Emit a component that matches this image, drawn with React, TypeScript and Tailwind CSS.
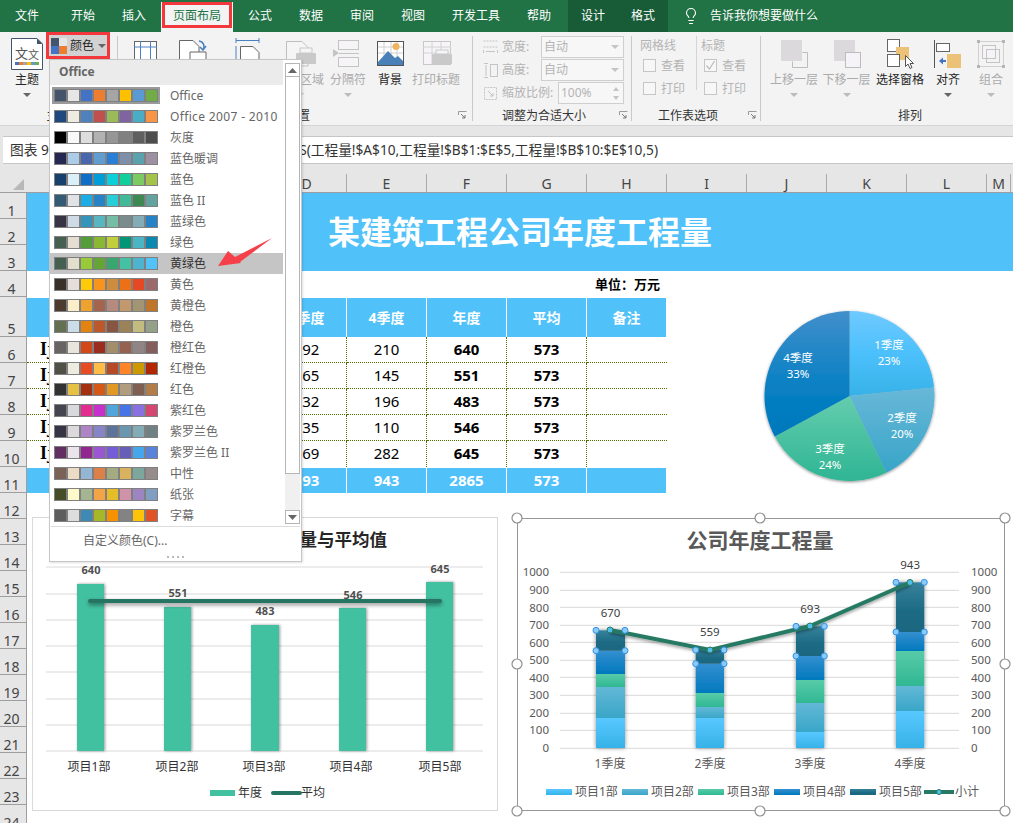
import React from "react";
import { Lightbulb } from "lucide-react";

const tabs: [string, string][] = [
  ["文件", "w-[54px]"],
  ["开始", "w-[58px]"],
  ["插入", "w-[44px]"],
];
const tabs2: [string, string][] = [
  ["公式", "w-[54px]"],
  ["数据", "w-[48px]"],
  ["审阅", "w-[54px]"],
  ["视图", "w-[48px]"],
  ["开发工具", "w-[78px]"],
  ["帮助", "w-[48px]"],
];

function Tab({ label, cls }: { label: string; cls: string }) {
  return <div className={`h-[32px] leading-[32px] text-center text-white text-[12px] ${cls}`}>{label}</div>;
}

function TabBar() {
  return (
    <div className="flex h-[32px] bg-[#217346] shrink-0">
      {tabs.map(([l, c]) => <Tab key={l} label={l} cls={c} />)}
      <div className="ml-[5px] mt-[2px] w-[72px] h-[30px] bg-[#f3f3f3] pl-px">
        <div className="h-[26px] w-[70px] border-[3px] border-[#f2383c] text-center leading-[21px] text-[12px] text-[#217346]">页面布局</div>
      </div>
      {tabs2.map(([l, c]) => <Tab key={l} label={l} cls={c} />)}
      <div className="ml-[5px] flex bg-[#185c37]">
        <Tab label="设计" cls="w-[50px]" />
        <Tab label="格式" cls="w-[50px]" />
      </div>
      <Lightbulb className="ml-[14px] mt-[7px] text-white" size={18} strokeWidth={1.5} />
      <div className="ml-[10px] leading-[32px] text-white text-[12px]">告诉我你想要做什么</div>
    </div>
  );
}

function Ic({ cx, children }: { cx: number; children?: React.ReactNode }) {
  return (
    <svg width={40} height={32} viewBox={`${cx - 20} 40 40 32`} className="overflow-visible shrink-0">
      {children}
    </svg>
  );
}

function Caret({ color }: { color: string }) {
  return (
    <svg width={8} height={4} viewBox="0 0 8 4">
      <path d="M0 0h8L4 4z" fill={color} />
    </svg>
  );
}

function Big({
  w,
  label,
  dis,
  arrow,
  children,
}: {
  w: string;
  label: string;
  dis?: boolean;
  arrow?: boolean;
  children?: React.ReactNode;
}) {
  return (
    <div className={`flex flex-col items-center pt-[8px] shrink-0 ${w}`}>
      <div className="h-[32px]">{children}</div>
      <div className={`h-[16px] leading-[16px] text-[12px] whitespace-nowrap ${dis ? "text-[#ababab]" : "text-[#262626]"}`}>{label}</div>
      {arrow ? (
        <div className="mt-[5px]">
          <Caret color={dis ? "#bcbcbc" : "#666666"} />
        </div>
      ) : null}
    </div>
  );
}

function Launcher() {
  return (
    <div className="w-[16px] flex items-center justify-center shrink-0">
      <svg width={9} height={9} viewBox="0 0 9 9">
        <path d="M.5 4V.5H8.5M.5 .5" fill="none" stroke="#9a9a9a" />
        <path d="M3 3l4 4M7 4v3H4" fill="none" stroke="#777" />
      </svg>
    </div>
  );
}

function Sep() {
  return <div className="w-px my-[4px] bg-[#c9c9c9] shrink-0" />;
}

function Combo({ w, text, spin }: { w: string; text: string; spin?: boolean }) {
  return (
    <div className={`h-[22px] border border-[#cfcfcf] bg-[#f7f7f7] flex items-center justify-between pl-[2px] pr-[4px] text-[12px] text-[#b4b4b4] ${w}`}>
      <span>{text}</span>
      {spin ? (
        <div className="flex flex-col gap-[5px]">
          <svg width={6} height={4} viewBox="0 0 6 4"><path d="M0 4L3 0l3 4z" fill="#c4c4c4" /></svg>
          <svg width={6} height={4} viewBox="0 0 6 4"><path d="M0 0h6L3 4z" fill="#c4c4c4" /></svg>
        </div>
      ) : (
        <Caret color="#c4c4c4" />
      )}
    </div>
  );
}

function Cb({ label, checked }: { label: string; checked?: boolean }) {
  return (
    <div className="h-[23px] flex items-center pl-[3px]">
      <div className="w-[13px] h-[13px] border border-[#c6c6c6] bg-[#f7f7f7] flex items-center justify-center">
        {checked ? (
          <svg width={11} height={11} viewBox="0 0 11 11"><path d="M1.5 5.5l3 3.5 5-8" fill="none" stroke="#bcbcbc" strokeWidth={1.2} /></svg>
        ) : null}
      </div>
      <span className="ml-[5px] text-[12px] text-[#b4b4b4]">{label}</span>
    </div>
  );
}

function SizeIcon({ kind }: { kind: number }) {
  return (
    <svg width={15} height={15} viewBox="0 0 15 15" className="mr-[4px]">
      {kind === 0 ? (
        <g fill="none" stroke="#c4c4c4">
          <path d="M.5 1h14M.5 7h14" strokeDasharray="2 1" />
          <path d="M.5 10v3M14.5 10v3M3 11.5h9" />
        </g>
      ) : null}
      {kind === 1 ? (
        <g fill="none" stroke="#c4c4c4">
          <rect x={7.5} y={1.5} width={7} height={12} />
          <path d="M1 .5h4M1 14.5h4M3 2v11" />
        </g>
      ) : null}
      {kind === 2 ? (
        <g fill="none" stroke="#c4c4c4">
          <rect x={1.5} y={1.5} width={12} height={12} strokeDasharray="2 1" />
          <path d="M5 5l5 5M10 7v3H7" />
        </g>
      ) : null}
    </svg>
  );
}

function GroupLabel({ text, launcher, cls }: { text: string; launcher?: boolean; cls?: string }) {
  return (
    <div className={`flex h-[18px] ${cls ?? ""}`}>
      <div className="flex-1 text-center text-[12px] leading-[20px] text-[#333]">{text}</div>
      {launcher ? <Launcher /> : null}
    </div>
  );
}

function Ribbon() {
  return (
    <div className="flex h-[94px] bg-[#f3f3f3] shrink-0 border-b border-[#d4d4d4]">
      <div className="w-[117px] flex flex-col shrink-0">
        <div className="h-[74px] flex items-start">
          <Big w="w-[46px] pl-[8px]" label="主题" arrow>
            <Ic cx={27}>
              <path d="M11.5 38.5H37L42.5 44V69.5H11.5z" fill="#fff" stroke="#44546a" />
              <path d="M37 38.5L42.5 44H37z" fill="#44546a" />
              <text x={15} y={58} fontSize={13} fill="#555">文</text>
              <text x={28} y={59} fontSize={11} fill="#555">文</text>
              <rect x={15} y={62} width={4} height={3} fill="#4472c4" />
              <rect x={19} y={62} width={4} height={3} fill="#ed7d31" />
              <rect x={23} y={62} width={4} height={3} fill="#a5a5a5" />
              <rect x={27} y={62} width={4} height={3} fill="#ffc000" />
              <rect x={31} y={62} width={4} height={3} fill="#5b9bd5" />
              <rect x={35} y={62} width={4} height={3} fill="#70ad47" />
            </Ic>
          </Big>
          <div className="w-[64px] h-[27px] border-[3px] border-[#f2383c] bg-[#d2d2d2] flex items-center pl-[2px]">
            <div className="w-[16px] h-[16px] grid grid-cols-2 grid-rows-2">
              <div className="bg-[#44546a]" />
              <div className="bg-[#e7e6e6]" />
              <div className="bg-[#4472c4]" />
              <div className="bg-[#ed7d31]" />
            </div>
            <span className="ml-[3px] text-[12px] text-[#262626]">颜色</span>
            <div className="ml-[4px]"><Caret color="#666" /></div>
          </div>
        </div>
        <GroupLabel text="主题" />
      </div>
      <Sep />
      <div className="w-[354px] flex flex-col shrink-0">
        <div className="h-[74px] flex">
          <Big w="w-[54px]" label="页边距" arrow>
            <Ic cx={146}>
              <rect x={135.5} y={41.5} width={22} height={24} fill="#fff" stroke="#666" />
              <path d="M135 47h23M141.5 41v24M151.5 41v24" stroke="#4a80c4" fill="none" />
            </Ic>
          </Big>
          <Big w="w-[44px]" label="纸张方向" arrow>
            <Ic cx={194}>
              <path d="M179.5 40.5H193l6 6V62h-19.5z" fill="#fff" stroke="#666" />
              <path d="M199 41c5 1 6 5 4 9M200 47l3 3 3-4" fill="none" stroke="#4a80c4" strokeWidth={1.5} />
              <path d="M190 52h16v14h-16z" fill="#fff" stroke="#666" />
            </Ic>
          </Big>
          <Big w="w-[62px]" label="纸张大小" arrow>
            <Ic cx={247}>
              <path d="M236 40.5h23M236 38v5M259 38v5" stroke="#4a80c4" fill="none" />
              <path d="M240.5 46.5H253l6 6V66h-18.5z" fill="#fff" stroke="#666" />
              <path d="M236 46v20" stroke="#4a80c4" />
            </Ic>
          </Big>
          <Big w="w-[44px]" label="打印区域" dis arrow>
            <Ic cx={300}>
              <path d="M286.5 41.5H302l6 6V66h-21.5z" fill="#f5f5f5" stroke="#bfbfbf" />
              <rect x={296} y={53} width={20} height={11} rx={1} fill="#c9c9c9" />
              <rect x={300} y={48} width={12} height={5} fill="#f5f5f5" stroke="#c9c9c9" />
            </Ic>
          </Big>
          <Big w="w-[52px]" label="分隔符" dis arrow>
            <Ic cx={348}>
              <rect x={338.5} y={40.5} width={20} height={9} fill="#f6f4f7" stroke="#c4c4c4" />
              <rect x={338.5} y={57.5} width={20} height={9} fill="#f6f4f7" stroke="#c4c4c4" />
              <path d="M333 49l6 4-6 4z" fill="#c4c4c4" />
              <path d="M339 53.5h20" stroke="#c4c4c4" />
            </Ic>
          </Big>
          <Big w="w-[32px]" label="背景">
            <Ic cx={390}>
              <rect x={377.5} y={41.5} width={26} height={24} fill="#fff" stroke="#555" />
              <path d="M378 47h25M378 53h25M384 42v23M391 42v23M397 42v23" stroke="#d0d0d0" fill="none" />
              <circle cx={396} cy={46.5} r={3.5} fill="#edb55e" />
              <path d="M378 62l10-11 7 7 3-2 5 5v4h-25z" fill="#4a80b8" />
            </Ic>
          </Big>
          <Big w="w-[60px]" label="打印标题" dis>
            <Ic cx={436}>
              <rect x={423.5} y={41.5} width={27} height={23} fill="#f6f4f7" stroke="#c8c8c8" />
              <path d="M423 47h28M423 53h28M432 42v22M441 42v22" stroke="#d2d2d2" fill="none" />
              <rect x={432} y={54} width={20} height={10} rx={1} fill="#c9c9c9" />
              <rect x={436} y={50} width={12} height={4} fill="#f6f4f7" stroke="#c9c9c9" />
            </Ic>
          </Big>
        </div>
        <GroupLabel text="页面设置" launcher cls="pr-[2px]" />
      </div>
      <Sep />
      <div className="w-[158px] flex flex-col shrink-0">
        <div className="h-[74px] flex flex-col pt-[4px] pl-[10px] gap-px">
          <div className="flex items-center h-[22px]">
            <SizeIcon kind={0} />
            <span className="w-[39px] text-[12px] text-[#b4b4b4]">宽度:</span>
            <Combo w="w-[83px]" text="自动" />
          </div>
          <div className="flex items-center h-[22px]">
            <SizeIcon kind={1} />
            <span className="w-[39px] text-[12px] text-[#b4b4b4]">高度:</span>
            <Combo w="w-[83px]" text="自动" />
          </div>
          <div className="flex items-center h-[22px]">
            <SizeIcon kind={2} />
            <span className="w-[56px] text-[12px] text-[#b4b4b4] whitespace-nowrap">缩放比例:</span>
            <Combo w="w-[66px]" text="100%" spin />
          </div>
        </div>
        <GroupLabel text="调整为合适大小" launcher />
      </div>
      <Sep />
      <div className="w-[128px] flex flex-col shrink-0">
        <div className="h-[74px] flex pt-[6px] pl-[8px]">
          <div className="w-[56px]">
            <div className="h-[16px] leading-[16px] text-[12px] text-[#b4b4b4]">网格线</div>
            <Cb label="查看" />
            <Cb label="打印" />
          </div>
          <div className="w-px h-[54px] bg-[#d4d4d4] -mt-[2px]" />
          <div className="pl-[4px]">
            <div className="h-[16px] leading-[16px] text-[12px] text-[#b4b4b4]">标题</div>
            <Cb label="查看" checked />
            <Cb label="打印" />
          </div>
        </div>
        <GroupLabel text="工作表选项" launcher />
      </div>
      <Sep />
      <div className="flex-1 flex flex-col">
        <div className="h-[74px] flex pl-[7px]">
          <Big w="w-[52px]" label="上移一层" dis arrow>
            <Ic cx={794}>
              <rect x={781} y={40} width={21} height={21} fill="#dcd9dc" />
              <path d="M802.5 52.5h5v15h-15v-6" fill="none" stroke="#bcbcbc" />
            </Ic>
          </Big>
          <Big w="w-[53px]" label="下移一层" dis arrow>
            <Ic cx={847}>
              <rect x={834} y={40} width={21} height={21} fill="#dcd9dc" />
              <rect x={845.5} y={52.5} width={15} height={15} fill="#f5f3f7" stroke="#bcbcbc" />
            </Ic>
          </Big>
          <Big w="w-[54px]" label="选择窗格">
            <Ic cx={900}>
              <rect x={887.5} y={39.5} width={12} height={12} fill="#fff" stroke="#666" />
              <rect x={896} y={47} width={13} height={13} fill="#ecc278" />
              <rect x={887.5} y={54.5} width={12} height={12} fill="#fff" stroke="#666" />
              <path d="M905.5 55.5v11l2.5-2.5 2 4.5 2-1-2-4h3.5z" fill="#fff" stroke="#555" />
            </Ic>
          </Big>
          <Big w="w-[42px]" label="对齐" arrow>
            <Ic cx={948}>
              <path d="M934.5 40v28" stroke="#555" />
              <rect x={936.5} y={43.5} width={13} height={8} fill="#fff" stroke="#666" />
              <rect x={947} y={54} width={14} height={14} fill="#ecc278" />
              <path d="M939 61l4-3.5v2.5h3v2h-3v2.5z" fill="#4472c4" />
            </Ic>
          </Big>
          <Big w="w-[44px]" label="组合" dis arrow>
            <Ic cx={991}>
              <rect x={978.5} y={41.5} width={25} height={25} fill="none" stroke="#d0d0d0" />
              <rect x={982.5} y={45.5} width={13} height={13} fill="#f5f3f7" stroke="#c4c4c4" />
              <rect x={986.5} y={49.5} width={13} height={13} fill="none" stroke="#c4c4c4" />
              <rect x={977} y={40} width={3} height={3} fill="#b5b5b5" />
              <rect x={1002} y={40} width={3} height={3} fill="#b5b5b5" />
              <rect x={977} y={65} width={3} height={3} fill="#b5b5b5" />
              <rect x={1002} y={65} width={3} height={3} fill="#b5b5b5" />
            </Ic>
          </Big>
        </div>
        <GroupLabel text="排列" cls="pl-[46px]" />
      </div>
    </div>
  );
}

function FormulaBar() {
  return (
    <div className="h-[38px] shrink-0 bg-[#e6e6e6] pt-[10px] pl-[3px]">
      <div className="h-[28px] bg-white border-y border-[#c6c6c6] flex text-[13.7px] leading-[25px] text-[#333]">
        <div className="w-[50px] pl-[7px] whitespace-nowrap overflow-hidden">图表 9</div>
        <div className="w-[605px] text-right whitespace-nowrap">=SERIES(工程量!$A$10,工程量!$B$1:$E$5,工程量!$B$10:$E$10,5)</div>
      </div>
    </div>
  );
}

const colLetters = ["A", "B", "C", "D", "E", "F", "G", "H", "I", "J", "K", "L"];

function ColHeader() {
  return (
    <div className="flex h-[29px] shrink-0 bg-[#e6e6e6] border-b border-[#9e9e9e] items-end">
      <div className="w-[27px] h-full flex items-end justify-end pr-[3px] pb-[2px]">
        <svg width={11} height={11} viewBox="0 0 11 11"><path d="M11 0v11H0z" fill="#b8b8b8" /></svg>
      </div>
      {colLetters.map((c) => (
        <div key={c} className="w-[80px] h-[18px] border-r border-[#ababab] text-center text-[14px] leading-[20px] text-[#444]">{c}</div>
      ))}
      <div className="w-[24px] h-[18px] border-r border-[#ababab] text-center text-[14px] leading-[20px] text-[#444]">M</div>
    </div>
  );
}

const rowHeights: [number, string][] = [
  [1, "h-[26px]"], [2, "h-[26px]"], [3, "h-[26px]"], [4, "h-[26px]"], [5, "h-[40px]"], [6, "h-[26px]"],
  [7, "h-[26px]"], [8, "h-[26px]"], [9, "h-[26px]"], [10, "h-[26px]"], [11, "h-[26px]"], [12, "h-[26px]"],
  [13, "h-[26px]"], [14, "h-[26px]"], [15, "h-[26px]"], [16, "h-[26px]"], [17, "h-[26px]"], [18, "h-[26px]"],
  [19, "h-[26px]"], [20, "h-[26px]"], [21, "h-[26px]"], [22, "h-[26px]"], [23, "h-[26px]"], [24, "h-[26px]"],
];

const dataRows: (string | number)[][] = [
  [192, 210, 640],
  [165, 145, 551],
  [132, 196, 483],
  [135, 110, 546],
  [169, 282, 645],
];

function HeadCell({ t }: { t?: string }) {
  return <div className="w-[80px] h-full bg-[#51c1fa] border-r border-white text-center font-bold text-white text-[14px] leading-[39px]">{t}</div>;
}

function Sheet() {
  return (
    <div className="flex flex-1 min-h-0 bg-white">
      <div className="w-[27px] shrink-0 bg-[#e6e6e6] border-r border-[#9e9e9e]">
        {rowHeights.map(([n, h]) => (
          <div key={n} className={`${h} border-b border-[#9e9e9e] flex items-end justify-center pr-[3px] text-[14px] leading-[14px] text-[#444]`}>{n}</div>
        ))}
      </div>
      <div className="flex-1 flex flex-col">
        <div className="h-[78px] bg-[#51c1fa] flex items-center justify-center text-[32px] font-bold text-white">某建筑工程公司年度工程量</div>
        <div className="w-[639px] h-[26px] flex items-center justify-end pt-[2px] pr-[6px] text-[13px] font-bold text-black">单位：万元</div>
        <div className="flex w-[639px] h-[39px] mt-px">
          <HeadCell />
          <HeadCell />
          <HeadCell />
          <HeadCell t="3季度" />
          <HeadCell t="4季度" />
          <HeadCell t="年度" />
          <HeadCell t="平均" />
          <div className="w-[79px] h-full bg-[#51c1fa] text-center font-bold text-white text-[14px] leading-[39px]">备注</div>
        </div>
        {dataRows.map((r, i) => {
          const b = i < 4;
          const c = b
            ? "h-[26px] w-[80px] border-b border-r border-dotted border-[#4f6f00] text-center text-[15px] leading-[25px] text-black"
            : "h-[26px] w-[80px] border-r border-dotted border-[#4f6f00] text-center text-[15px] leading-[25px] text-black";
          const cb = b
            ? "h-[26px] w-[80px] border-b border-r border-dotted border-[#4f6f00] text-center text-[15px] font-bold leading-[25px] text-black"
            : "h-[26px] w-[80px] border-r border-dotted border-[#4f6f00] text-center text-[15px] font-bold leading-[25px] text-black";
          return (
            <div key={i} className="flex w-[640px]">
              <div className={`${c} !text-left pl-[13px] font-['Liberation_Serif',serif] font-bold !text-[18px]`}>Ij</div>
              <div className={c} />
              <div className={c} />
              <div className={c}>{r[0]}</div>
              <div className={c}>{r[1]}</div>
              <div className={cb}>{r[2]}</div>
              <div className={cb}>573</div>
              <div className={b ? "h-[26px] w-[80px] border-b border-dotted border-[#4f6f00]" : "h-[26px] w-[80px]"} />
            </div>
          );
        })}
        <div className="flex w-[639px] h-[25px] mt-px text-center text-white font-bold text-[15px] leading-[24px]">
          {["", "", "", "693", "943", "2865", "573"].map((t, i) => (
            <div key={i} className="w-[80px] bg-[#51c1fa] border-r border-white">{t}</div>
          ))}
          <div className="w-[79px] bg-[#51c1fa]" />
        </div>
      </div>
    </div>
  );
}

const palettes: [string, string[]][] = [
  ["Office", ["#44546a", "#e7e6e6", "#4472c4", "#ed7d31", "#a5a5a5", "#ffc000", "#5b9bd5", "#70ad47"]],
  ["Office 2007 - 2010", ["#1f497d", "#eeece1", "#4f81bd", "#c0504d", "#9bbb59", "#8064a2", "#4bacc6", "#f79646"]],
  ["灰度", ["#000000", "#f8f8f8", "#dddddd", "#b2b2b2", "#969696", "#808080", "#5f5f5f", "#4d4d4d"]],
  ["蓝色暖调", ["#242852", "#acccea", "#4a66ac", "#629dd1", "#297fd5", "#7f8fa9", "#5aa2ae", "#9d90a0"]],
  ["蓝色", ["#17406d", "#dbeff9", "#0f6fc6", "#009dd9", "#0bd0d9", "#10cf9b", "#7cca62", "#a5c249"]],
  ["蓝色 II", ["#335b74", "#dfe3e5", "#1cade4", "#2683c6", "#27ced7", "#42ba97", "#3e8853", "#62a39f"]],
  ["蓝绿色", ["#373545", "#cedbe6", "#3494ba", "#58b6c0", "#75bda7", "#7a8c8e", "#84acb6", "#2683c6"]],
  ["绿色", ["#455f51", "#e3ded1", "#549e39", "#8ab833", "#c0cf3a", "#029676", "#4ab5c4", "#0989b1"]],
  ["黄绿色", ["#455f51", "#e2dfcc", "#99cb38", "#63a537", "#37a76f", "#44c1a3", "#4eb3cf", "#51c3f9"]],
  ["黄色", ["#39302a", "#e5dedb", "#ffca08", "#f8931d", "#ce8d3e", "#ec7016", "#e64823", "#9c6a6a"]],
  ["黄橙色", ["#4e3b30", "#fbeec9", "#f0a22e", "#a5644e", "#b58b80", "#c3986d", "#a19574", "#c17529"]],
  ["橙色", ["#637052", "#ccddea", "#e48312", "#bd582c", "#865640", "#9b8357", "#c2bc80", "#94a088"]],
  ["橙红色", ["#696464", "#e9e5dc", "#d34817", "#9b2d1f", "#a28e6a", "#956251", "#918485", "#855d5d"]],
  ["红橙色", ["#505046", "#eeece0", "#e84c22", "#ffbd47", "#b64926", "#ff8427", "#cc9900", "#b22600"]],
  ["红色", ["#323232", "#e5c243", "#a5300f", "#d55816", "#e19825", "#b19c7d", "#7f5f52", "#b27d49"]],
  ["紫红色", ["#454551", "#d8d9dc", "#e32d91", "#c830cc", "#4ea6dc", "#4775e7", "#8971e1", "#d54773"]],
  ["紫罗兰色", ["#373545", "#dcd8dc", "#ad84c6", "#8784c7", "#5d739a", "#6997af", "#84acb6", "#6f8183"]],
  ["紫罗兰色 II", ["#632e62", "#eae5eb", "#92278f", "#9b57d3", "#755dd9", "#665eb8", "#45a5ed", "#5982db"]],
  ["中性", ["#7b6256", "#ecdcc5", "#94b6d2", "#dd8047", "#a5ab81", "#d8b25c", "#7ba79d", "#968c8c"]],
  ["纸张", ["#444d26", "#fefac9", "#a5b592", "#f3a447", "#e7bc29", "#d092a7", "#9c85c0", "#809ec2"]],
  ["字幕", ["#5e5e5e", "#dddddd", "#3f8ab4", "#a6b727", "#f69200", "#838383", "#fec306", "#df5327"]],
];

function ColorMenu() {
  return (
    <div className="absolute left-[49px] top-[59px] w-[253px] h-[503px] bg-white border border-[#c6c6c6] shadow-[1px_1px_2px_rgba(0,0,0,0.12)] flex flex-col">
      <div className="flex h-[466px]">
        <div className="w-[234px]">
          <div className="h-[25px] bg-[#ebebeb] pl-[9px] text-[12px] font-bold leading-[24px] text-[#666]">Office</div>
          {palettes.map(([name, cs], i) => (
            <div key={name} className={`h-[21px] flex items-center pl-[4px] ${i === 8 ? "bg-[#c5c5c5]" : ""}`}>
              <div className={`flex h-[13px] w-[104px] py-px bg-[#808080] ${i === 0 ? "outline-2 outline-[#9a9a9a]" : ""}`}>
                {cs.map((c, j) => (
                  <div key={j} className="w-[11px] h-[11px] mx-px" style={{ background: c }} />
                ))}
              </div>
              <span className={`ml-[12px] text-[12px] whitespace-nowrap ${i === 8 ? "text-[#333]" : "text-[#666]"} ${i === 1 ? "tracking-[0.35px]" : ""}`}>{name}</span>
            </div>
          ))}
        </div>
        <div className="w-[18px] pt-[3px] flex flex-col items-center">
          <div className="w-[15px] h-[14px] border border-[#b5b5b5] bg-white flex items-center justify-center">
            <svg width={9} height={5} viewBox="0 0 9 5"><path d="M0 5L4.5 0 9 5z" fill="#666" /></svg>
          </div>
          <div className="w-[15px] h-[397px] border border-t-0 border-[#b5b5b5] bg-white" />
          <div className="w-[15px] h-[36px] bg-[#f0f0f0]" />
          <div className="w-[15px] h-[14px] border border-[#b5b5b5] bg-white flex items-center justify-center">
            <svg width={9} height={5} viewBox="0 0 9 5"><path d="M0 0h9L4.5 5z" fill="#666" /></svg>
          </div>
        </div>
      </div>
      <div className="h-px mx-px bg-[#dcdcdc]" />
      <div className="pl-[33px] h-[28px] leading-[28px] text-[12px] text-[#666]">自定义颜色(C)...</div>
      <div className="flex justify-center gap-[3px] mt-[1px]">
        <div className="w-[2px] h-[2px] bg-[#b8b8b8]" />
        <div className="w-[2px] h-[2px] bg-[#b8b8b8]" />
        <div className="w-[2px] h-[2px] bg-[#b8b8b8]" />
        <div className="w-[2px] h-[2px] bg-[#b8b8b8]" />
      </div>
    </div>
  );
}

function RedArrow() {
  return (
    <svg className="absolute left-[210px] top-[230px] overflow-visible" width={70} height={42} viewBox="210 230 70 42">
      <path d="M218 266L228 251 235 257 272 238 240 262 241 263z" fill="#f5404a" />
    </svg>
  );
}

function PieChart() {
  const vals = [670, 559, 693, 943];
  const total = 2865;
  const cx = 849.5;
  const cy = 396;
  const r = 85;
  let a = 0;
  const paths = vals.map((v) => {
    const s = a;
    a += (v / total) * Math.PI * 2;
    const e = a;
    const p = `M${cx} ${cy}L${cx + r * Math.sin(s)} ${cy - r * Math.cos(s)}A${r} ${r} 0 ${e - s > Math.PI ? 1 : 0} 1 ${cx + r * Math.sin(e)} ${cy - r * Math.cos(e)}Z`;
    return p;
  });
  const labels: [string, string, number, number][] = [
    ["1季度", "23%", 889, 345],
    ["2季度", "20%", 902, 418],
    ["3季度", "24%", 830, 449],
    ["4季度", "33%", 798, 358],
  ];
  return (
    <svg className="absolute left-[750px] top-[300px] overflow-visible" width={200} height={190} viewBox="750 300 200 190">
      <defs>
        <linearGradient id="p0" x1="0" y1="0" x2="0" y2="1"><stop offset="0" stopColor="#6fcaff" /><stop offset="0.5" stopColor="#4cc0fb" /><stop offset="1" stopColor="#36b2e8" /></linearGradient>
        <linearGradient id="p1" x1="0" y1="0" x2="0" y2="1"><stop offset="0" stopColor="#68b8d8" /><stop offset="1" stopColor="#38a5c8" /></linearGradient>
        <linearGradient id="p2" x1="0" y1="0" x2="0" y2="1"><stop offset="0" stopColor="#64cdae" /><stop offset="1" stopColor="#2fb594" /></linearGradient>
        <linearGradient id="p3" x1="0" y1="0" x2="0" y2="1"><stop offset="0" stopColor="#418fca" /><stop offset="0.6" stopColor="#0880c4" /><stop offset="1" stopColor="#0077bb" /></linearGradient>
        <filter id="pieShadow" x="-10%" y="-10%" width="120%" height="120%">
          <feDropShadow dx="0" dy="1" stdDeviation="1.5" floodOpacity="0.45" />
        </filter>
      </defs>
      <g filter="url(#pieShadow)">
        {paths.map((d, i) => <path key={i} d={d} fill={`url(#p${i})`} />)}
      </g>
      {labels.map(([a1, b1, x, y]) => (
        <g key={a1} fill="#fff" fontSize={11.5} textAnchor="middle">
          <text x={x} y={y + 4}>{a1}</text>
          <text x={x} y={y + 20}>{b1}</text>
        </g>
      ))}
    </svg>
  );
}

function LeftChart() {
  const grid = [567, 594, 620, 646, 672, 699, 725, 751];
  const bars: [number, number, number, string, number, number, string, number][] = [
    [77, 104, 584, "640", 91, 570, "项目1部", 89],
    [164, 191, 607, "551", 178, 593, "项目2部", 177],
    [251, 279, 625, "483", 265, 611, "项目3部", 264],
    [339, 366, 608, "546", 353, 595, "项目4部", 351],
    [426, 453, 582, "645", 440, 569, "项目5部", 440],
  ];
  return (
    <div className="absolute left-[32px] top-[517px] w-[466px] h-[294px] bg-white border border-[#d9d9d9]">
      <svg className="absolute -left-px -top-px" width={466} height={294} viewBox="32 517 466 294">
        <defs>
          <filter id="barS" x="-30%" y="-5%" width="160%" height="110%">
            <feDropShadow dx="1" dy="0" stdDeviation="1.5" floodOpacity="0.4" />
          </filter>
          <filter id="lineS" x="-5%" y="-300%" width="110%" height="800%">
            <feDropShadow dx="0" dy="2" stdDeviation="2" floodOpacity="0.45" />
          </filter>
        </defs>
        <text x={387} y={546} textAnchor="end" fontSize={17.5} fontWeight={700} fill="#262626" fontFamily="'Liberation Serif','Noto Sans CJK SC',serif">各项目部年度工程量与平均值</text>
        {grid.map((y) => <line key={y} x1={46} x2={483} y1={y} y2={y} stroke="#d9d9d9" />)}
        {bars.map(([x1, x2, top, v, lx, ly, n, nx]) => (
          <g key={n}>
            <rect x={x1} y={top} width={x2 - x1} height={751 - top} fill="#42c1a0" filter="url(#barS)" />
            <text x={lx} y={ly + 4} textAnchor="middle" fontSize={11} fontWeight={700} fill="#505050">{v}</text>
            <text x={nx} y={771} textAnchor="middle" fontSize={12} fill="#333">{n}</text>
          </g>
        ))}
        <rect x={88} y={599} width={354} height={4} rx={2} fill="#267563" filter="url(#lineS)" />
        <rect x={210} y={790} width={25} height={6} fill="#42c1a0" />
        <text x={238} y={797} fontSize={12} fill="#333">年度</text>
        <line x1={273} x2={300} y1={793} y2={793} stroke="#267563" strokeWidth={4} strokeLinecap="round" />
        <text x={301} y={797} fontSize={12} fill="#333">平均</text>
      </svg>
    </div>
  );
}

function RightChart() {
  const z = (v: number) => 510 + v / 3;
  const ticks = [1000, 900, 800, 700, 600, 500, 400, 300, 200, 100, 0];
  const tickY = [572.3, 589.5, 607.5, 624.5, 642.5, 659.5, 677.5, 694.5, 712.5, 730, 747.5];
  const gridY = [572.3, 590.3, 607.3, 625.3, 642.3, 660.3, 677.3, 695.3, 713.3, 730.3, 748.3];
  const cols: [number, number, number[], string, number][] = [
    [596, 625, [714, 624, 531, 492, 422, 361], "670", 613],
    [695.7, 724, [714, 624, 591, 549, 461, 420], "559", 632],
    [796, 824.3, [714, 666, 579, 510, 438, 349], "693", 609],
    [896, 924.3, [714, 603, 528, 423, 366, 217], "943", 565],
  ];
  const linePts = [[610, 630], [710, 650], [810, 626], [910, 582.5]];
  const legend: [number, string][] = [[546, "项目1部"], [622, "项目2部"], [698, "项目3部"], [774, "项目4部"], [850, "项目5部"]];
  const handles: [number, number][] = [[517, 518], [760, 518], [1005, 518], [517, 664], [1005, 664], [517, 811], [760, 811], [1005, 811]];
  return (
    <div className="absolute left-[517px] top-[518px] w-[488px] h-[293px] bg-white border border-[#979797]">
      <svg className="absolute -left-px -top-px overflow-visible" width={488} height={293} viewBox="517 518 488 293">
        <defs>
          <linearGradient id="s0" x1="0" y1="0" x2="0" y2="1"><stop offset="0" stopColor="#58c8ff" /><stop offset="1" stopColor="#36b2e8" /></linearGradient>
          <linearGradient id="s1" x1="0" y1="0" x2="0" y2="1"><stop offset="0" stopColor="#63b8d6" /><stop offset="1" stopColor="#39a6c8" /></linearGradient>
          <linearGradient id="s2" x1="0" y1="0" x2="0" y2="1"><stop offset="0" stopColor="#58cba8" /><stop offset="1" stopColor="#30b793" /></linearGradient>
          <linearGradient id="s3" x1="0" y1="0" x2="0" y2="1"><stop offset="0" stopColor="#348fd0" /><stop offset="1" stopColor="#0079bd" /></linearGradient>
          <linearGradient id="s4" x1="0" y1="0" x2="0" y2="1"><stop offset="0" stopColor="#38819c" /><stop offset="0.6" stopColor="#1b6a84" /><stop offset="1" stopColor="#1a6680" /></linearGradient>
          <filter id="stackS" x="-40%" y="-10%" width="180%" height="120%">
            <feDropShadow dx="0" dy="0" stdDeviation="2" floodOpacity="0.45" />
          </filter>
          <filter id="curveS" x="-5%" y="-20%" width="110%" height="140%">
            <feDropShadow dx="0" dy="2" stdDeviation="1.5" floodOpacity="0.35" />
          </filter>
        </defs>
        <text x={760} y={548} textAnchor="middle" fontSize={21} fontWeight={700} fill="#595959">公司年度工程量</text>
        {gridY.map((y) => <line key={y} x1={560} x2={959} y1={y} y2={y} stroke="#d9d9d9" />)}
        {ticks.map((t, i) => (
          <g key={t} fontSize={11.5} fill="#595959">
            <text x={549} y={tickY[i] + 4} textAnchor="end">{t}</text>
            <text x={971} y={tickY[i] + 4}>{t}</text>
          </g>
        ))}
        {cols.map(([x1, x2, ys], ci) => (
          <g key={ci} filter="url(#stackS)">
            {[0, 1, 2, 3, 4].map((s) => (
              <rect key={s} x={x1} y={z(ys[s + 1])} width={x2 - x1} height={(ys[s] - ys[s + 1]) / 3} fill={`url(#s${s})`} />
            ))}
          </g>
        ))}
        {cols.map(([x1, x2, , v, ly], ci) => (
          <text key={ci} x={(x1 + x2) / 2} y={ly + 4} textAnchor="middle" fontSize={11.5} fill="#404040">{v}</text>
        ))}
        {[610, 710, 810, 910].map((x, ci) => (
          <text key={x} x={x} y={768} textAnchor="middle" fontSize={12} fill="#595959">{`${ci + 1}季度`}</text>
        ))}
        <polyline points={linePts.map((p) => p.join(",")).join(" ")} fill="none" stroke="#267a63" strokeWidth={4} filter="url(#curveS)" />
        {linePts.map(([x, y]) => <circle key={x} cx={x} cy={y} r={3} fill="#4fbfea" stroke="#267a63" />)}
        {cols.map(([x1, x2, ys], ci) =>
          [ys[5], ys[4]].flatMap((v) =>
            [x1, x2].map((x) => (
              <circle key={`${ci}-${x}-${v}`} cx={x} cy={z(v)} r={3} fill="#8ccbf6" stroke="#2f92ea" />
            ))
          )
        )}
        {legend.map(([x, t], i) => (
          <g key={t}>
            <rect x={x} y={789} width={26} height={6} fill={`url(#s${i})`} />
            <text x={x + 29} y={796} fontSize={12} fill="#595959">{t}</text>
          </g>
        ))}
        <line x1={924} x2={954} y1={792} y2={792} stroke="#267a63" strokeWidth={4} />
        <circle cx={939} cy={792} r={2.5} fill="#4fbfea" stroke="#267a63" />
        <text x={955} y={796} fontSize={12} fill="#595959">小计</text>
        {handles.map(([x, y]) => <circle key={`${x}-${y}`} cx={x} cy={y} r={5} fill="#fff" stroke="#8f8f8f" strokeWidth={1.2} />)}
      </svg>
    </div>
  );
}

export default function App() {
  return (
    <div className="relative w-[1013px] h-[823px] overflow-hidden bg-white flex flex-col font-['Noto_Sans','Noto_Sans_CJK_SC',sans-serif]">
      <TabBar />
      <Ribbon />
      <FormulaBar />
      <ColHeader />
      <Sheet />
      <PieChart />
      <LeftChart />
      <RightChart />
      <ColorMenu />
      <RedArrow />
    </div>
  );
}
